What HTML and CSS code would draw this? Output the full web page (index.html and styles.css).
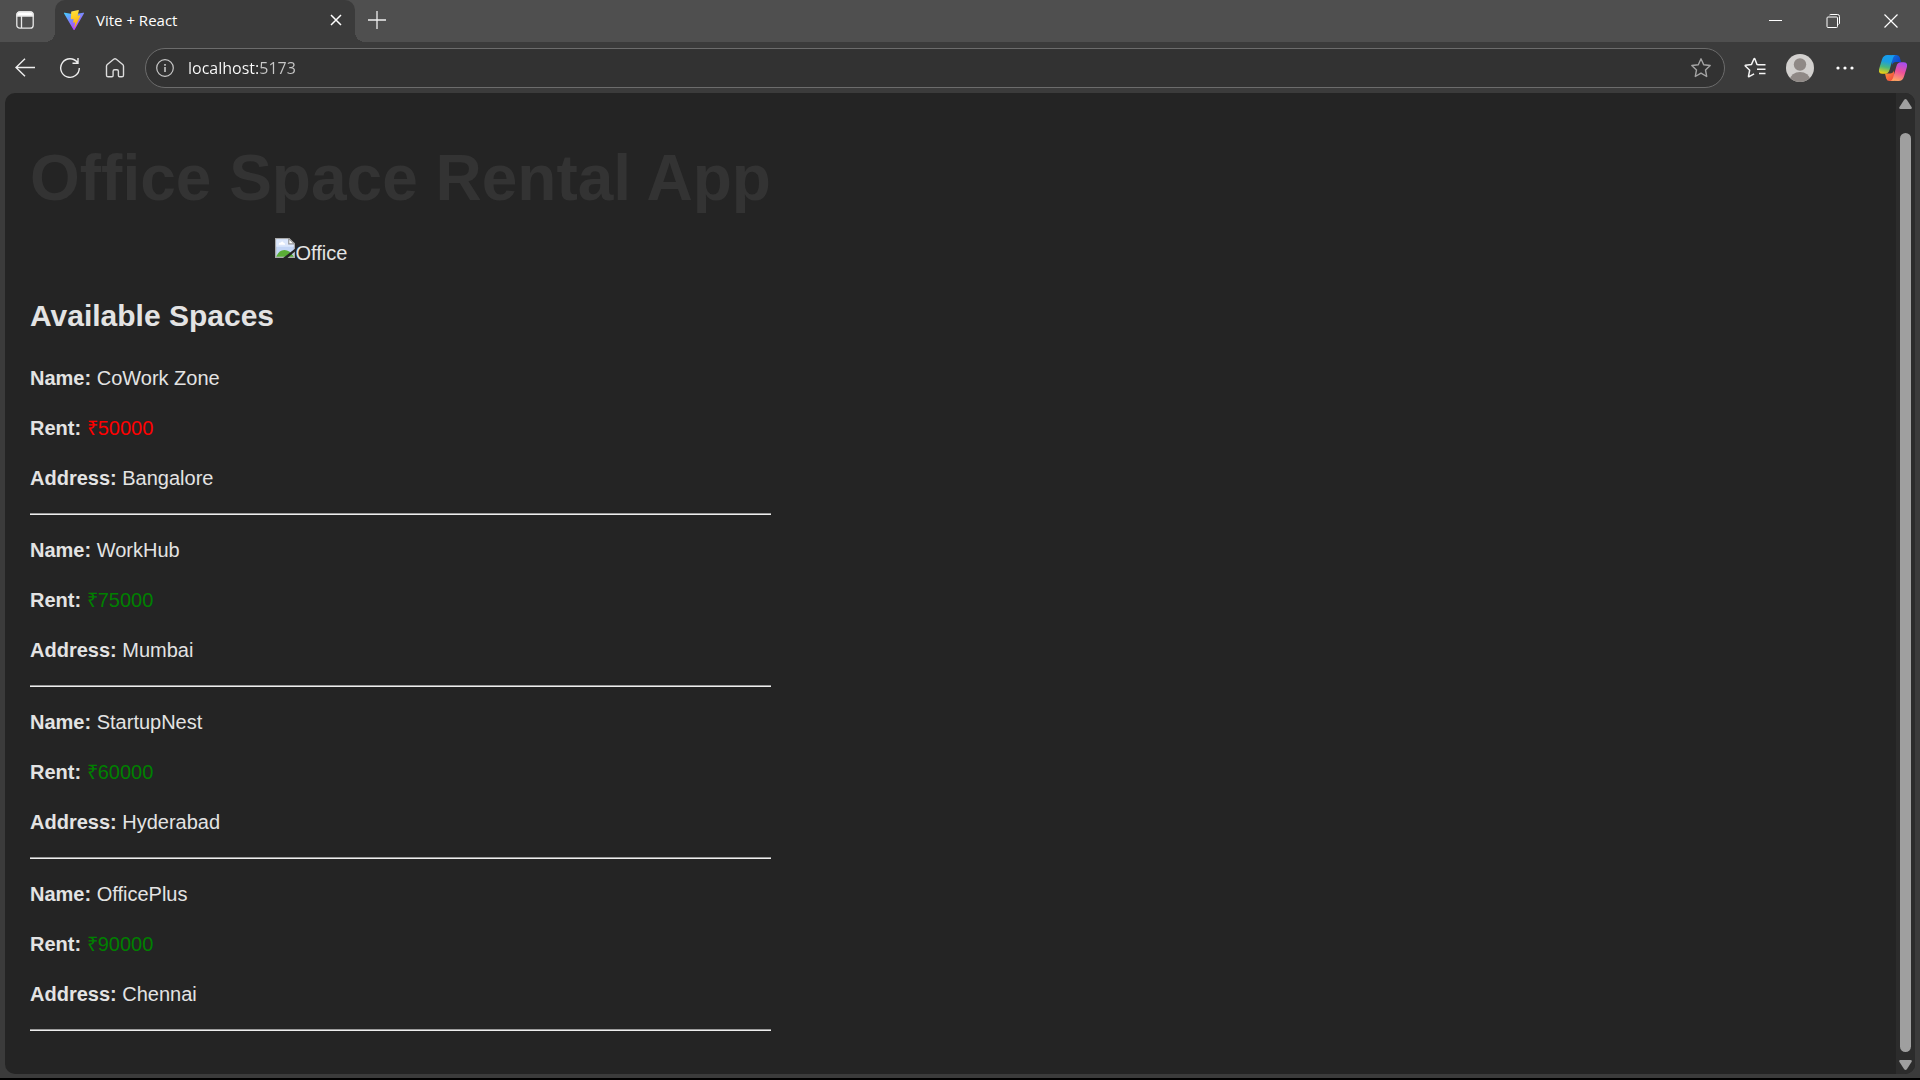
FILE: index.html
```html
<!DOCTYPE html>
<html lang="en">
<head>
<meta charset="utf-8">
<title>Vite + React</title>
<link rel="stylesheet" href="styles.css">
</head>
<body>
<header class="tab-strip">
  <button class="tab-actions" aria-label="Tab actions">
    <svg width="18" height="18" viewBox="0 0 18 18" fill="none" stroke="#e8e8e8" stroke-width="1.3"><rect x=".8" y=".8" width="16.4" height="16.4" rx="3"/><path d="M1 3.8Q1 1 4 1h10q3 0 3 2.800V5H1z" fill="#fff"/><path d="M5.500 5v12"/></svg>
  </button>
  <div class="tab">
    <svg width="20" height="20" viewBox="0 0 32 32" aria-hidden="true">
      <defs>
        <linearGradient id="vite-body" x1="0" y1="0" x2=".6" y2="1"><stop stop-color="#41d1ff"/><stop offset="1" stop-color="#bd34fe"/></linearGradient>
        <linearGradient id="vite-bolt" x1=".4" y1="0" x2=".6" y2="1"><stop stop-color="#ffea83"/><stop offset=".1" stop-color="#ffdd35"/><stop offset="1" stop-color="#ffa800"/></linearGradient>
      </defs>
      <path d="M31.900 5.700 17 31.500q-.9 1.200-1.800 0L.1 5.700Q-.4 4.100 1.300 4.200L16 6.800l14.700-2.600q1.700-.1 1.200 1.500z" fill="url(#vite-body)"/>
      <path d="m23.100 0-11 2.200-.5.600-.7 11.400.8.700 3-.7.700.8-.9 4.500.8.700 1.900-.6.700.8-1.500 7 .8.400L26.300 9.400l-.6-.9-3.300.6-.6-.8 2.100-7.500z" fill="url(#vite-bolt)"/>
    </svg>
    <span class="tab-title">Vite + React</span>
    <button class="tab-close" aria-label="Close tab">
      <svg width="12" height="12" viewBox="0 0 12 12" stroke="#fff" stroke-width="1.500"><path d="m1 1 10 10M11 1 1 11"/></svg>
    </button>
  </div>
  <button class="new-tab" aria-label="New tab">
    <svg width="18" height="18" viewBox="0 0 18 18" stroke="#f0f0f0" stroke-width="1.300"><path d="M9 0v18M0 9h18"/></svg>
  </button>
  <div class="window-controls">
    <button aria-label="Minimize"><svg width="14" height="14" viewBox="0 0 14 14" stroke="#fff"><path d="M1 6.500h13"/></svg></button>
    <button aria-label="Restore"><svg width="14" height="14" viewBox="0 0 14 14" stroke="#fff" fill="none"><rect x="1" y="3" width="10.500" height="10.500" rx="1"/><path d="M3.500 1Q4 .5 5 .5h6.500q2 0 2 2V9q0 1-1 1.500"/></svg></button>
    <button aria-label="Close"><svg width="14" height="14" viewBox="0 0 14 14" stroke="#fff" stroke-width="1.200"><path d="m.5.5 13 13m0-13-13 13"/></svg></button>
  </div>
</header>

<nav class="toolbar">
  <button class="tool" aria-label="Back">
    <svg width="20" height="20" viewBox="0 0 20 20" fill="none" stroke="#eee" stroke-width="1.400"><path d="M20 9.500H1M10 .8 1 9.500l9 8.700"/></svg>
  </button>
  <button class="tool" aria-label="Refresh">
    <svg width="22" height="22" viewBox="0 0 22 22" fill="none" stroke="#eee" stroke-width="1.400"><path d="M20.300 11A9.300 9.300 0 1 1 18.500 5.500M19 1v5.300h-5.500"/></svg>
  </button>
  <button class="tool" aria-label="Home">
    <svg width="20" height="20" viewBox="0 0 20 20" fill="none" stroke="#ddd" stroke-width="1.400"><path d="M1.500 8.200q0-1 .8-1.700l6.400-5.200q1.300-1 2.600 0l6.400 5.200q.8.700.8 1.700v9q0 1.600-1.600 1.600h-2.300q-1.200 0-1.200-1.300v-4.300q0-1.500-1.500-1.500H9.600q-1.500 0-1.500 1.500v4.300q0 1.300-1.200 1.300H3.100q-1.600 0-1.600-1.600z"/></svg>
  </button>
  <div class="address">
    <button class="site-info" aria-label="Site information">
      <svg width="18" height="18" viewBox="0 0 18 18" fill="none" stroke="#c8c8c8" stroke-width="1.200"><circle cx="9" cy="9" r="8.300"/><path d="M9 8v5M9 5v1.700" stroke-width="1.600"/></svg>
    </button>
    <input class="url" type="text" value="localhost:5173" aria-label="Address">
    <button class="favorite" aria-label="Add to favorites">
      <svg width="22" height="22" viewBox="0 0 22 22" fill="none" stroke="#a4a4a4" stroke-width="1.400" stroke-linejoin="round"><path d="m11 1.800 2.700 5.900 6.500.8-4.700 4.400 1.200 6.600L11 16.200l-5.700 3.300 1.200-6.600L1.800 8.500l6.500-.8z"/></svg>
    </button>
  </div>
  <button class="tool" aria-label="Favorites">
    <svg width="22" height="22" viewBox="0 0 22 22" fill="none" stroke="#f4f4f4" stroke-width="1.500" stroke-linejoin="round"><path d="M14.500 7.800 13 7.500 10.800 1.800q-.3-.6-.8 0L7.500 7.400l-5.900.9q-.7.200-.3.700l4.400 4.200-1.200 6q0 .8.600.5l5-2.800M13 7.800h8.500M13 12.300h8.500M15 16.500h6.500"/></svg>
  </button>
  <button class="tool" aria-label="Profile">
    <svg width="28" height="28" viewBox="0 0 28 28"><defs><clipPath id="avatar"><circle cx="14" cy="14" r="14"/></clipPath></defs><g clip-path="url(#avatar)"><path fill="#d2d0ce" d="M0 0h28v28H0z"/><g fill="#8f8986"><circle cx="14" cy="10.500" r="6.200"/><ellipse cx="14" cy="26" rx="10" ry="8"/></g></g></svg>
  </button>
  <button class="tool" aria-label="Settings and more">
    <svg width="18" height="4" viewBox="0 0 18 4" fill="#fff"><circle cx="2" cy="2" r="1.600"/><circle cx="9" cy="2" r="1.600"/><circle cx="16" cy="2" r="1.600"/></svg>
  </button>
  <button class="copilot" aria-label="Copilot">
    <svg width="28" height="26" viewBox="0 0 28 26">
      <defs>
        <linearGradient id="co-a" x1=".5" y1="0" x2=".3" y2="1"><stop stop-color="#159df0"/><stop offset=".35" stop-color="#1b9de0"/><stop offset=".65" stop-color="#4bb87b"/><stop offset="1" stop-color="#f2d210"/></linearGradient>
        <linearGradient id="co-b" x1=".7" y1="0" x2=".4" y2="1"><stop stop-color="#a64df0"/><stop offset=".5" stop-color="#ee5199"/><stop offset="1" stop-color="#ffa763"/></linearGradient>
        <linearGradient id="co-c" x1="0" y1="0" x2="1" y2="1"><stop stop-color="#1470d8"/><stop offset="1" stop-color="#0c38c8"/></linearGradient>
        <linearGradient id="co-d" x1="0" y1="0" x2="1" y2="1"><stop stop-color="#ff9b38"/><stop offset="1" stop-color="#ee4040"/></linearGradient>
      </defs>
      <path d="M13 0h4.500q2.500 0 3.300 2.500L22 7h-5q-3 0-4 3z" fill="url(#co-c)"/>
      <path d="M15 26h-4.500q-2.500 0-3.300-2.500L6 18.500h5q3 0 4-3z" fill="url(#co-d)"/>
      <path d="M17 .3Q15 0 14 3l-3.500 12q-1 3.700-4.500 3.700H3q-4.300 0-2.700-5.500L3 4.500Q4.300 0 8.500 0z" fill="url(#co-a)"/>
      <path d="M11 25.700q2 .3 3-2.700l3.500-12q1-3.700 4.500-3.700h3q4.300 0 2.700 5.500L25 21.500Q23.700 26 19.500 26z" fill="url(#co-b)"/>
    </svg>
  </button>
</nav>

<div class="viewport">
  <main class="page">
    <div class="app">
      <h1>Office Space Rental App</h1>
      <div class="photo" role="img" aria-label="Office">
        <svg width="20" height="20" viewBox="0 0 16 16"><path d="M.5.500h10.800l4.200 4.200v10.800H.5z" fill="#c3d5f5" stroke="#aaa"/><path d="M1 1h10v4h4v2H1z" fill="#dce7fb"/><path d="M3 5q0-1.500 1.500-1.300Q6 1.800 7 3.900q1.500.1 1 1.500H3z" fill="#fff"/><path d="M1 15q2-5.500 6.500-5.500T15 15z" fill="#5aad36"/><path d="M11 .5v4.200h4.500z" fill="#fff" stroke="#999"/><path d="M6.500 16 16 8.500v2.200L10 16z" fill="#242424"/></svg><span>Office</span>
      </div>
      <h2>Available Spaces</h2>
      <section class="space">
        <p><strong>Name:</strong> CoWork Zone</p>
        <p><strong>Rent:</strong> <span class="rent-low">₹50000</span></p>
        <p><strong>Address:</strong> Bangalore</p>
        <hr>
      </section>
      <section class="space">
        <p><strong>Name:</strong> WorkHub</p>
        <p><strong>Rent:</strong> <span class="rent-high">₹75000</span></p>
        <p><strong>Address:</strong> Mumbai</p>
        <hr>
      </section>
      <section class="space">
        <p><strong>Name:</strong> StartupNest</p>
        <p><strong>Rent:</strong> <span class="rent-high">₹60000</span></p>
        <p><strong>Address:</strong> Hyderabad</p>
        <hr>
      </section>
      <section class="space">
        <p><strong>Name:</strong> OfficePlus</p>
        <p><strong>Rent:</strong> <span class="rent-high">₹90000</span></p>
        <p><strong>Address:</strong> Chennai</p>
        <hr>
      </section>
    </div>
  </main>
  <div class="scrollbar" aria-hidden="true">
    <svg width="13" height="10" viewBox="0 0 13 10" fill="#9f9f9f"><path d="M5 1q1.500-2 3 0l4.500 7q1 2-1 2h-10q-2 0-1-2z"/></svg>
    <div class="thumb"></div>
    <svg width="13" height="10" viewBox="0 0 13 10" fill="#9f9f9f"><path d="M5 9q1.500 2 3 0l4.500-7q1-2-1-2h-10q-2 0-1 2z"/></svg>
  </div>
</div>
</body>
</html>
```
FILE: styles.css
```css
* {
  box-sizing: border-box;
}

body {
  display: flex;
  flex-direction: column;
  min-height: 100vh;
  margin: 0;
  background: #3b3b3b;
  border-bottom: 2px solid #000;
  color: #e3e3e3;
  font-family: "Liberation Sans", Arial, sans-serif;
  font-size: 20px;
  line-height: 30px;
}

button {
  display: flex;
  align-items: center;
  justify-content: center;
  flex: none;
  padding: 0;
  border: 0;
  background: none;
}

svg {
  display: block;
  flex: none;
}

/* Tab strip */
.tab-strip {
  display: flex;
  height: 42px;
  background: #4f4f4f;
}

.tab-actions {
  width: 55px;
  padding: 0 5px 2px 0;
}

.tab {
  position: relative;
  display: flex;
  align-items: center;
  width: 300px;
  padding: 0 8px 2px 9px;
  border-radius: 10px 10px 0 0;
  background: #3b3b3b;
}

.tab::before,
.tab::after {
  content: "";
  position: absolute;
  bottom: 0;
  width: 10px;
  height: 10px;
}

.tab::before {
  right: 100%;
  background: radial-gradient(circle at 0 0, #4f4f4f 10px, #3b3b3b 10px);
}

.tab::after {
  left: 100%;
  background: radial-gradient(circle at 100% 0, #4f4f4f 10px, #3b3b3b 10px);
}

.tab-title {
  flex: 1;
  padding-left: 12px;
  color: #fff;
  font-family: "Open Sans", "Noto Sans", sans-serif;
  font-size: 15px;
}

.tab-close {
  width: 22px;
  height: 22px;
}

.new-tab {
  width: 44px;
  padding-bottom: 2px;
}

.window-controls {
  display: flex;
  margin-left: auto;
}

.window-controls button {
  width: 58px;
}

/* Toolbar */
.toolbar {
  display: flex;
  align-items: center;
  height: 51px;
  padding: 0 2px;
}

.tool {
  width: 45px;
  height: 40px;
}

.address {
  display: flex;
  align-items: center;
  flex: 1;
  height: 40px;
  margin: 0 7px 0 8px;
  border: 1px solid #6c6c6c;
  border-radius: 20px;
  background: #323232;
}

.site-info {
  width: 38px;
}

.url {
  flex: 1;
  min-width: 0;
  padding: 0 4px;
  border: 0;
  background: linear-gradient(90deg, #fff 75px, #c8c8c8 75px) text;
  color: transparent;
  font-family: "Open Sans", "Noto Sans", sans-serif;
  font-size: 16px;
}

.favorite {
  width: 46px;
}

.copilot {
  width: 51px;
  height: 40px;
}

/* Page area */
.viewport {
  display: flex;
  flex: 1;
  margin: 0 5px 4px;
  border-radius: 10px;
  background: #242424;
  overflow: hidden;
}

.page {
  flex: 1;
  padding: 50px 25px 20px;
}

.app {
  width: fit-content;
}

h1 {
  margin: 0 0 25px;
  color: #333;
  font-size: 64px;
  line-height: 70px;
}

.photo {
  display: flex;
  width: 250px;
  height: 30px;
  margin: 0 auto;
}

h2 {
  margin: 25px 0;
  font-size: 30px;
  line-height: 45px;
}

p {
  margin: 20px 0;
}

hr {
  height: 2px;
  margin: 20px 0;
  border: 0;
  border-top: 1px solid #9a9a9a;
  background: #eee;
}

.rent-low {
  color: red;
}

.rent-high {
  color: green;
}

.scrollbar {
  display: flex;
  flex-direction: column;
  align-items: center;
  width: 19px;
  padding: 6px 0 4px;
  background: #2c2c2c;
}

.thumb {
  flex: 1;
  width: 11px;
  margin: 24px 0 8px;
  border-radius: 6px;
  background: #9f9f9f;
}
```
